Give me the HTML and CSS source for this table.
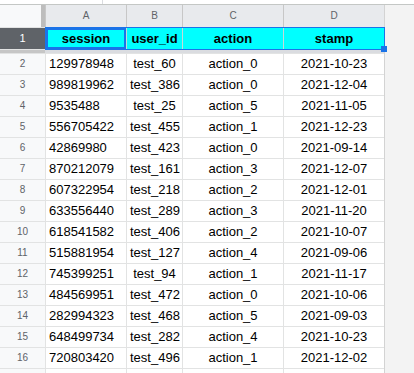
FILE: index.html
```html
<!DOCTYPE html>
<html>
<head>
<meta charset="utf-8">
<link rel="stylesheet" href="styles.css">
</head>
<body>
<div class="topbar"><span class="tick"></span></div>
<div class="grid">
  <div class="row colhead">
    <div class="corner"></div>
    <div class="ch">A</div>
    <div class="ch">B</div>
    <div class="ch">C</div>
    <div class="ch">D</div>
  </div>
  <div class="row hrow">
    <div class="rh">1</div>
    <div class="c">session</div>
    <div class="c">user_id</div>
    <div class="c">action</div>
    <div class="c">stamp</div>
    <div class="range"></div>
    <div class="active"></div>
    <div class="handle"></div>
  </div>
  <div class="freeze"><div class="fz-head"></div><div class="fz-body"></div></div>
  <div class="row"><div class="rh">2</div><div class="c num">129978948</div><div class="c">test_60</div><div class="c">action_0</div><div class="c">2021-10-23</div></div>
  <div class="row"><div class="rh">3</div><div class="c num">989819962</div><div class="c">test_386</div><div class="c">action_0</div><div class="c">2021-12-04</div></div>
  <div class="row"><div class="rh">4</div><div class="c num">9535488</div><div class="c">test_25</div><div class="c">action_5</div><div class="c">2021-11-05</div></div>
  <div class="row"><div class="rh">5</div><div class="c num">556705422</div><div class="c">test_455</div><div class="c">action_1</div><div class="c">2021-12-23</div></div>
  <div class="row"><div class="rh">6</div><div class="c num">42869980</div><div class="c">test_423</div><div class="c">action_0</div><div class="c">2021-09-14</div></div>
  <div class="row"><div class="rh">7</div><div class="c num">870212079</div><div class="c">test_161</div><div class="c">action_3</div><div class="c">2021-12-07</div></div>
  <div class="row"><div class="rh">8</div><div class="c num">607322954</div><div class="c">test_218</div><div class="c">action_2</div><div class="c">2021-12-01</div></div>
  <div class="row"><div class="rh">9</div><div class="c num">633556440</div><div class="c">test_289</div><div class="c">action_3</div><div class="c">2021-11-20</div></div>
  <div class="row"><div class="rh">10</div><div class="c num">618541582</div><div class="c">test_406</div><div class="c">action_2</div><div class="c">2021-10-07</div></div>
  <div class="row"><div class="rh">11</div><div class="c num">515881954</div><div class="c">test_127</div><div class="c">action_4</div><div class="c">2021-09-06</div></div>
  <div class="row"><div class="rh">12</div><div class="c num">745399251</div><div class="c">test_94</div><div class="c">action_1</div><div class="c">2021-11-17</div></div>
  <div class="row"><div class="rh">13</div><div class="c num">484569951</div><div class="c">test_472</div><div class="c">action_0</div><div class="c">2021-10-06</div></div>
  <div class="row"><div class="rh">14</div><div class="c num">282994323</div><div class="c">test_468</div><div class="c">action_5</div><div class="c">2021-09-03</div></div>
  <div class="row"><div class="rh">15</div><div class="c num">648499734</div><div class="c">test_282</div><div class="c">action_4</div><div class="c">2021-10-23</div></div>
  <div class="row"><div class="rh">16</div><div class="c num">720803420</div><div class="c">test_496</div><div class="c">action_1</div><div class="c">2021-12-02</div></div>
  <div class="row"><div class="rh"></div><div class="c num"></div><div class="c"></div><div class="c"></div><div class="c"></div></div>
</div>
</body>
</html>
```
FILE: styles.css
```css
html, body {
  margin: 0;
  height: 373px;
  overflow: hidden;
  background: #f3f3f3;
  font-family: "Liberation Sans", Arial, sans-serif;
}
.topbar {
  height: 4px;
  background: #ffffff;
  border-bottom: 1px solid #c4c7c5;
  display: flex;
}
.tick {
  margin-left: 102px;
  width: 1px;
  height: 4px;
  background: #dadce0;
}
.grid {
  width: 384px;
  display: grid;
  row-gap: 1px;
  background: #e2e3e3;
  border-right: 1px solid #d3d3d3;
}
.row {
  display: grid;
  grid-template-columns: 45px 80px 55px 100px 100px;
  column-gap: 1px;
  height: 20px;
  line-height: 20px;
  font-size: 13px;
  color: #000;
}
.row .rh {
  background: #f8f9fa;
  color: #5f6368;
  font-size: 10px;
  text-align: center;
}
.row .c {
  background: #ffffff;
  text-align: center;
  white-space: nowrap;
  overflow: visible;
  padding: 0 3px;
}
.row .c.num {
  text-align: left;
}
.colhead {
  height: 22px;
  line-height: 22px;
  background: #c7c7c7;
}
.corner {
  background: #f8f9fa;
  border-right: 4px solid #bdbdbd;
}
.ch {
  background: #e8eaed;
  color: #5f6368;
  font-size: 10px;
  text-align: center;
}
.hrow {
  height: 21px;
  line-height: 21px;
  position: relative;
  background: #c6d8d8;
}
.hrow .rh {
  background: #5f6368;
  color: #ffffff;
  font-size: 11px;
}
.hrow .c {
  background: #00ffff;
  font-weight: bold;
}
.range {
  position: absolute;
  left: 45px;
  top: -1px;
  width: 340px;
  height: 23px;
  box-sizing: border-box;
  border: 1px solid #1a73e8;
}
.active {
  position: absolute;
  left: 46px;
  top: 0;
  width: 80px;
  height: 21px;
  box-sizing: border-box;
  border: 2px solid #1a73e8;
}
.handle {
  position: absolute;
  left: 381px;
  top: 18px;
  width: 6px;
  height: 6px;
  background: #1a73e8;
}
.freeze {
  height: 3px;
  display: grid;
  grid-template-columns: 45px 1fr;
}
.fz-head {
  background: #c6c6c6;
}
.fz-body {
  background: #dadce0;
}
```
